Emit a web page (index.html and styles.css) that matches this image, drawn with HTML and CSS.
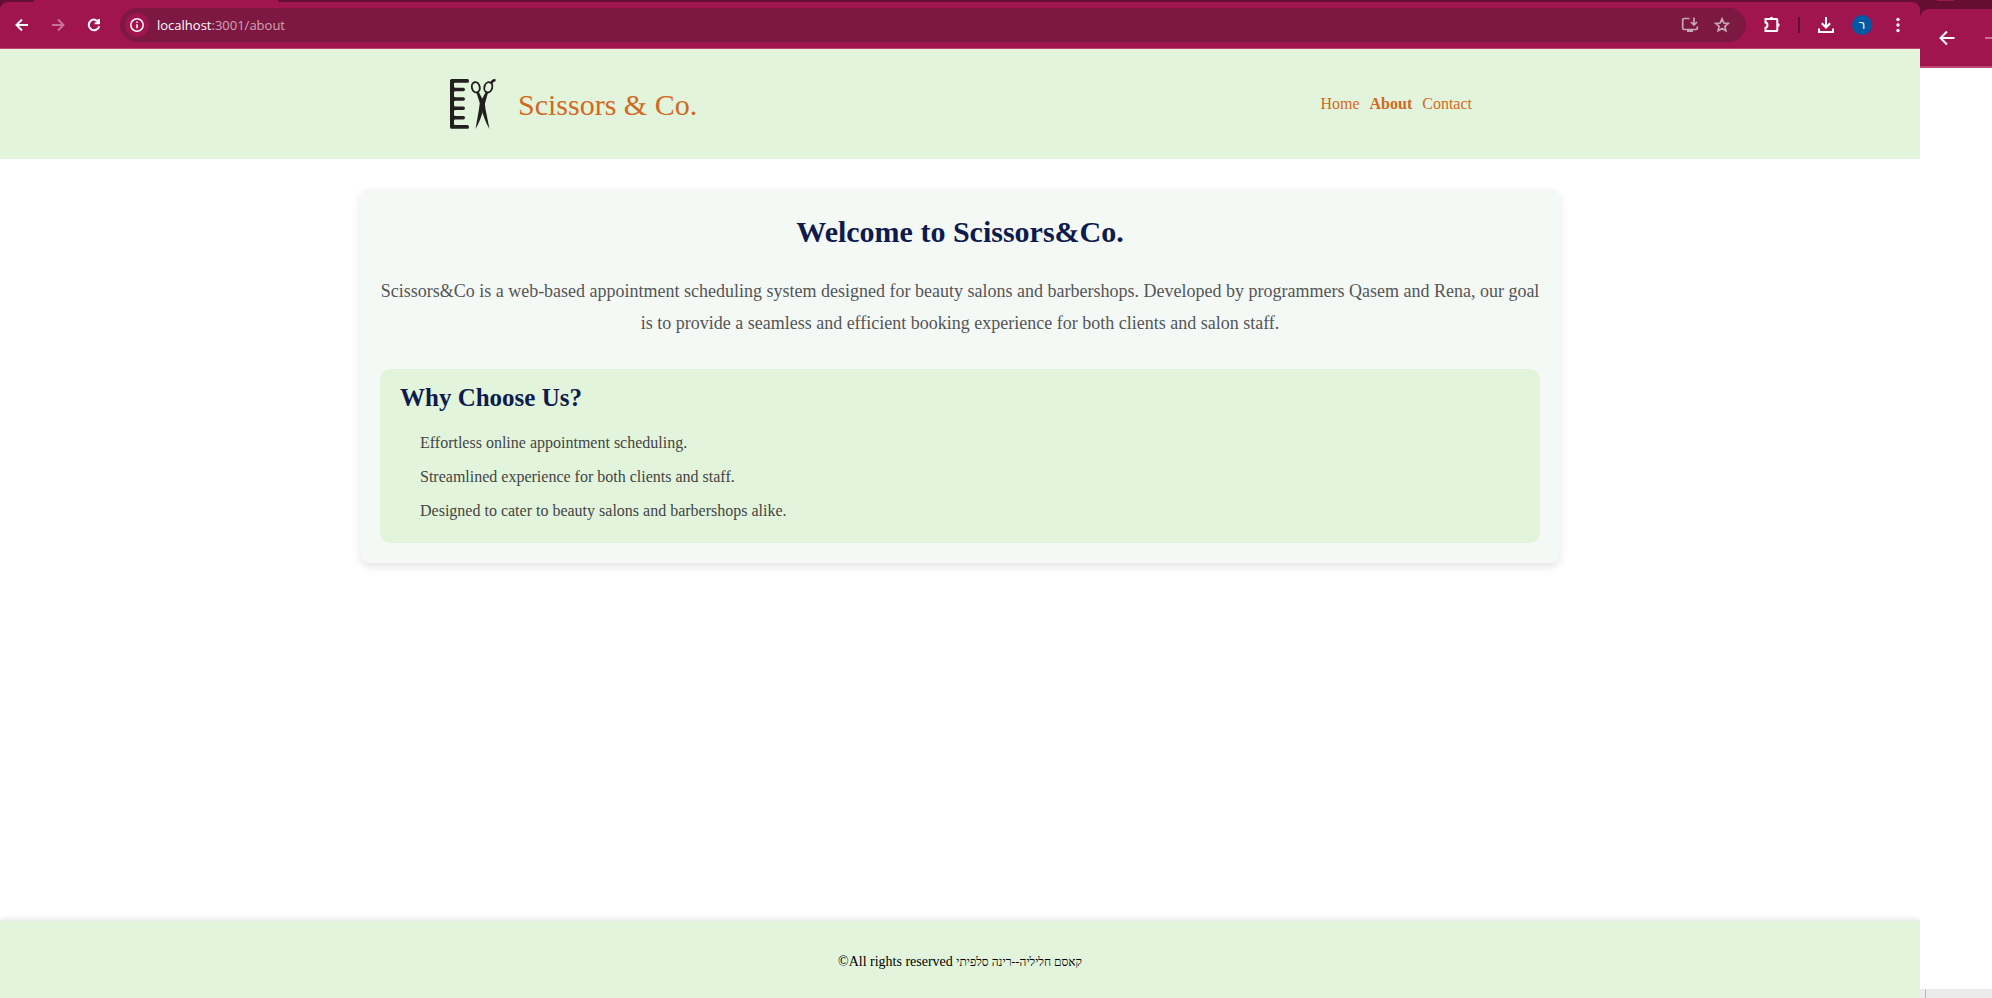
FILE: index.html
```html
<!DOCTYPE html>
<html lang="en">
<head>
<meta charset="utf-8">
<title>Scissors &amp; Co. – About</title>
<link rel="stylesheet" href="styles.css">
</head>
<body>
<div class="desktop">
  <section class="window">
    <div class="tab-strip"><span class="tab-edge"></span></div>
    <div class="toolbar">
      <button class="tool" aria-label="Back"><svg viewBox="0 0 20 20"><path d="M16 10H5M10 4.500 4.500 10l5.500 5.500"/></svg></button>
      <button class="tool faded" aria-label="Forward"><svg viewBox="0 0 20 20"><path d="M4 10h11M10 4.500 15.500 10 10 15.500"/></svg></button>
      <button class="tool" aria-label="Reload"><svg viewBox="0 0 20 20"><path d="M14.600 7.200A5.300 5.300 0 1 0 15.200 11.200M15 4v4.200h-4.300"/></svg></button>
      <div class="omnibox">
        <button class="site-info" aria-label="Site information"><svg viewBox="0 0 16 16"><circle cx="8" cy="8" r="6.200"/><path d="M8 7.300v4M8 4.500v1.600"/></svg></button>
        <span class="url" role="textbox" aria-label="Address"><span class="host">localhost</span>:3001/about</span>
        <button class="small-tool" aria-label="Install app"><svg viewBox="0 0 18 18"><path d="M8.500 2.500H3a1.300 1.300 0 0 0-1.300 1.300v8.400a1.300 1.300 0 0 0 1.300 1.300h12a1.300 1.300 0 0 0 1.300-1.300V10.500M13 1.500v7M10 6l3 3 3-3"/><path class="solid" d="M6 13h6v3H6z"/></svg></button>
        <button class="small-tool" aria-label="Bookmark"><svg viewBox="0 0 18 18"><path d="m9 2.800 1.800 4.200 4.500.4-3.400 3 1 4.400L9 12.500l-3.900 2.300 1-4.400-3.400-3 4.500-.4z"/></svg></button>
      </div>
      <button class="tool" aria-label="Extensions"><svg viewBox="0 0 20 20"><path d="M3.500 4h11a.8.8 0 0 1 .8.8v10.400a.8.800 0 0 1-.8.8h-11v-3.300c2.600-.3 2.600-4.800 0-5.100z"/><path class="solid" d="M7.800 3.500a1.700 1.700 0 0 1 3.400 0zM16 8.300a1.700 1.700 0 0 1 0 3.400z"/></svg></button>
      <span class="divider"></span>
      <button class="tool" aria-label="Downloads"><svg viewBox="0 0 20 20"><path d="M10 2v10M5.800 8.300 10 12.500l4.200-4.200M3 13.500V17h14v-3.500"/></svg></button>
      <button class="avatar" aria-label="Profile">ר</button>
      <button class="tool" aria-label="Menu"><svg viewBox="0 0 20 20"><g class="solid"><circle cx="10" cy="4.500" r="1.700"/><circle cx="10" cy="10" r="1.700"/><circle cx="10" cy="15.500" r="1.700"/></g></svg></button>
    </div>
    <div class="page">
      <header class="site-header">
        <div class="header-inner">
          <div class="brand">
            <svg class="logo" viewBox="0 0 60 60" aria-hidden="true">
              <path class="comb" d="M2 5.500Q2 4 3.500 4H19.500Q21 4 21 5.900 21 7.800 19.500 7.800H7Q6 7.800 6 8.800V11.500Q6 12.800 7.500 12.800H15.300a1.700 1.700 0 0 1 0 3.400H7.500Q6 16.200 6 17.500V21Q6 22.300 7.500 22.300H15.300a1.700 1.700 0 0 1 0 3.400H7.500Q6 25.700 6 27V30.300Q6 31.600 7.500 31.600H15.300a1.700 1.700 0 0 1 0 3.400H7.500Q6 35 6 36.300V39.700Q6 41 7.500 41H15.300a1.700 1.700 0 0 1 0 3.400H7.500Q6 44.400 6 45.700V49Q6 50 7 50H19.500Q21 50 21 51.900 21 53.800 19.500 53.800H3.500Q2 53.800 2 52.300z"/>
              <ellipse class="ring" cx="27.800" cy="12.300" rx="3.900" ry="5.200" transform="rotate(-14 27.800 12.300)"/>
              <ellipse class="ring" cx="40.300" cy="12.300" rx="3.900" ry="5.200" transform="rotate(18 40.300 12.300)"/>
              <path class="tang" d="M43.500 8.200Q44 5.500 47.500 5"/>
              <path class="comb" d="M28.500 17.800 30.800 17 36.800 28.500 37.500 34 41.500 54Q36 45 33 32z"/>
              <path class="comb" d="M40 17.800 37.700 17 31.700 28.500 31 34 27.500 54Q33 45 36 32z"/>
            </svg>
            <span class="brand-name">Scissors &amp; Co.</span>
          </div>
          <nav class="site-nav">
            <a href="#">Home</a>
            <a href="#" class="current" aria-current="page">About</a>
            <a href="#">Contact</a>
          </nav>
        </div>
      </header>
      <main class="content">
        <article class="card">
          <h1>Welcome to Scissors&amp;Co.</h1>
          <p class="intro">Scissors&amp;Co is a web-based appointment scheduling system designed for beauty salons and barbershops. Developed by programmers Qasem and Rena, our goal is to provide a seamless and efficient booking experience for both clients and salon staff.</p>
          <section class="reasons">
            <h2>Why Choose Us?</h2>
            <ul>
              <li>Effortless online appointment scheduling.</li>
              <li>Streamlined experience for both clients and staff.</li>
              <li>Designed to cater to beauty salons and barbershops alike.</li>
            </ul>
          </section>
        </article>
      </main>
      <footer class="site-footer">©All rights reserved <span lang="he" class="names">קאסם חליליה--רינה סלפיתי</span></footer>
    </div>
  </section>
  <section class="side-window">
    <div class="side-strip"><span class="side-tab"></span></div>
    <div class="side-toolbar">
      <button class="side-tool" aria-label="Back"><svg viewBox="0 0 24 24"><path d="M19.500 12H6M12 5.500 5.500 12l6.500 6.500"/></svg></button>
      <button class="side-tool faded" aria-label="Forward"><svg viewBox="0 0 24 24"><path d="M2 12h17M12 5.500l6.500 6.500-6.500 6.500"/></svg></button>
    </div>
    <div class="side-page"></div>
    <div class="side-status"></div>
  </section>
</div>
</body>
</html>
```
FILE: styles.css
```css
* { box-sizing: border-box; }

:root {
  --frame: #650d33;
  --bar: #a1154f;
  --bar-line: #bd4675;
  --omnibox: #7d1842;
  --mint: #e2f5dc;
  --navy: #0f1b4c;
  --brand: #d2691e;
}

body {
  margin: 0;
  background: #fff;
  font-family: "Liberation Serif", "Times New Roman", serif;
  font-size: 16px;
}

button {
  display: flex;
  align-items: center;
  justify-content: center;
  flex: none;
  padding: 0;
  border: 0;
  background: none;
  color: #fff;
}

svg {
  display: block;
  width: 100%;
  height: 100%;
  fill: none;
  stroke: currentColor;
  stroke-width: 2;
}

.solid { fill: currentColor; stroke: none; }

.desktop {
  display: flex;
  min-height: 100vh;
}

/* Browser window */
.window {
  display: flex;
  flex: 1;
  flex-direction: column;
  min-width: 0;
  background: var(--frame);
}

.tab-strip {
  height: 2px;
  padding-left: 34px;
}

.tab-edge {
  display: block;
  width: 244px;
  height: 2px;
  background: var(--bar);
}

.toolbar {
  display: flex;
  align-items: center;
  gap: 16px;
  height: 47px;
  padding: 0 12px;
  border-bottom: 1px solid var(--bar-line);
  border-radius: 8px 8px 0 0;
  background: var(--bar);
}

.tool { width: 20px; height: 20px; }
.faded { opacity: 0.4; }

.omnibox {
  display: flex;
  flex: 1;
  align-items: center;
  gap: 14px;
  height: 34px;
  padding: 0 15px 0 5px;
  border-radius: 17px;
  background: var(--omnibox);
}

.site-info {
  width: 24px;
  height: 24px;
  margin-right: -6px;
  border-radius: 50%;
  background: var(--bar);
}

.site-info svg { width: 16px; height: 16px; stroke-width: 1.5; }

.url {
  flex: 1;
  color: #d3a3b6;
  font: 13px/20px "Open Sans", "Noto Sans", sans-serif;
}

.host { color: #fff; }

.small-tool { width: 18px; height: 18px; color: #c6a7b3; }
.small-tool svg { stroke-width: 1.7; }

.divider { width: 2px; height: 16px; background: var(--frame); }

.avatar {
  width: 20px;
  height: 20px;
  border-radius: 50%;
  background: #0059a5;
  font: 12px/20px "Liberation Sans", sans-serif;
}

/* Page */
.page {
  display: flex;
  flex: 1;
  flex-direction: column;
  background: #fff;
}

.site-header { padding: 20px; background: var(--mint); }

.header-inner {
  display: flex;
  align-items: center;
  justify-content: space-between;
  max-width: 1024px;
  height: 70px;
  margin: 0 auto;
}

.brand {
  display: flex;
  align-items: center;
  gap: 10px;
  padding-top: 2px;
  color: var(--brand);
}

.logo { width: 60px; height: 60px; color: #231f20; }
.comb { fill: currentColor; stroke: none; }
.ring { stroke-width: 1.9; }
.tang { stroke-width: 2.4; }
.brand-name { font-size: 30px; line-height: 34px; }

.site-nav { display: flex; gap: 10px; }
.site-nav a { color: var(--brand); text-decoration: none; }
.site-nav .current { font-weight: bold; }

.content { flex: 1; padding: 30px 20px; }

.card {
  max-width: 1200px;
  margin: 0 auto;
  padding: 20px;
  border-radius: 10px;
  background: #f4f9f6;
  box-shadow: 0 4px 8px rgba(0, 0, 0, 0.1);
}

h1, h2 { margin: 0; color: var(--navy); }
h1 { font-size: 30px; line-height: 46px; text-align: center; }
h2 { font-size: 25px; line-height: 38px; }

.intro {
  margin: 20px 0 30px;
  color: #555;
  font-size: 18px;
  line-height: 32px;
  text-align: center;
}

.reasons {
  padding: 10px 20px;
  border-radius: 10px;
  background: var(--mint);
}

.reasons ul {
  margin: 14px 0 0;
  padding: 0 0 0 20px;
  color: #444;
  line-height: 24px;
  list-style: none;
}

.reasons li { margin-bottom: 10px; }

.site-footer {
  padding: 33px 20px 28px;
  background: var(--mint);
  box-shadow: 0 -2px 5px rgba(0, 0, 0, 0.1);
  color: #000;
  font-size: 14px;
  line-height: 16px;
  text-align: center;
}

.names { font-size: 12px; }

/* Neighbouring window */
.side-window {
  display: flex;
  flex: none;
  flex-direction: column;
  width: 72px;
  overflow: hidden;
  background: var(--frame);
}

.side-strip { height: 9px; padding-left: 17px; }
.side-tab { display: block; width: 17px; height: 1px; background: var(--bar); }

.side-toolbar {
  display: flex;
  align-items: center;
  gap: 24px;
  height: 59px;
  padding-left: 15px;
  border-bottom: 2px solid var(--bar-line);
  border-radius: 9px 0 0 0;
  background: var(--bar);
}

.side-tool { width: 24px; height: 24px; }
.side-page { flex: 1; background: #fff; }

.side-status {
  height: 9px;
  border-left: 5px solid #ededed;
  background: linear-gradient(90deg, #b5b5b5 1px, #ebebeb 1px);
}
```
